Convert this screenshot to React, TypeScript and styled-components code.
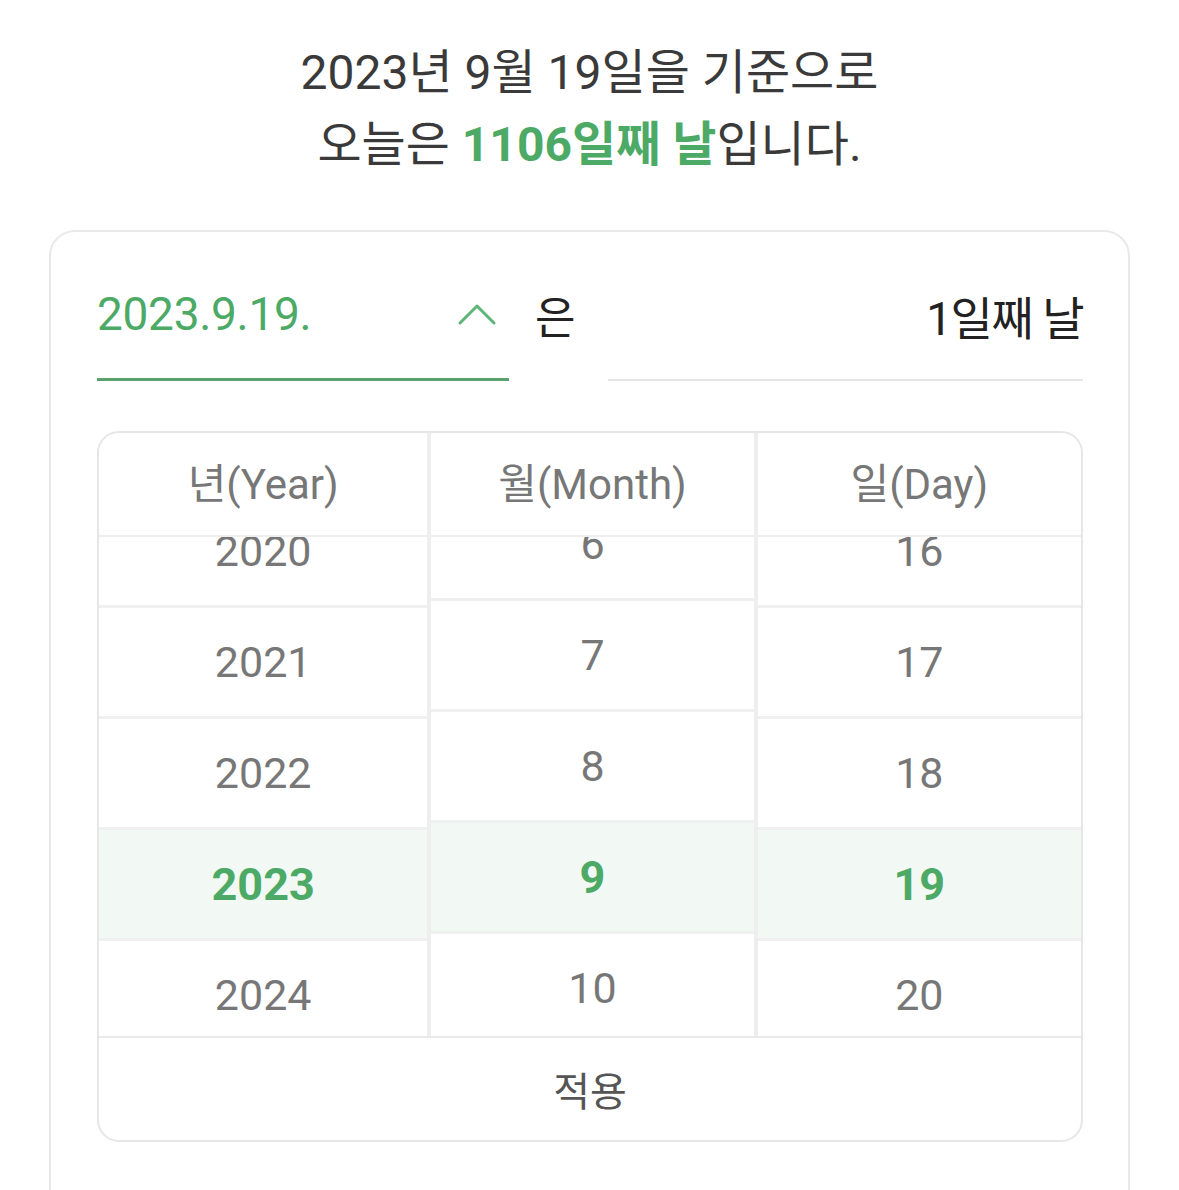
import React from "react";
import styled, { createGlobalStyle } from "styled-components";

const GlobalStyle = createGlobalStyle`
    body {
        margin: 0;
        background: #ffffff;
        font-family: Roboto, "Noto Sans CJK KR", sans-serif;
    }
    * {
        box-sizing: border-box;
    }
`;

const GREEN = "#4caa66";

// only the rows that show in the scroll window
const years = [2020, 2021, 2022, 2023, 2024];
const months = [6, 7, 8, 9, 10];
const days = [16, 17, 18, 19, 20];

interface PickerColumnProps {
    title: string;
    items: number[];
    selected: number;
    offset: number;
}

const PickerColumn: React.FC<PickerColumnProps> = ({ title, items, selected, offset }) => (
    <Column>
        <ColumnHeader>{title}</ColumnHeader>
        <ScrollWindow>
            <ItemList $offset={offset}>
                {items.map((item) => (
                    <Item key={item} $active={item === selected}>
                        {item}
                    </Item>
                ))}
            </ItemList>
        </ScrollWindow>
    </Column>
);

export default function App() {
    return (
        <Wrapper>
            <GlobalStyle />
            <Title>
                2023년 9월 19일을 기준으로
                <br />
                오늘은 <Strong>1106일째 날</Strong>입니다.
            </Title>
            <Card>
                <InputRow>
                    <DateField>
                        <DateText>2023.9.19.</DateText>
                        <svg width="40" height="24" viewBox="0 0 40 24" fill="none">
                            <path
                                d="M3 21 L20 4 L37 21"
                                stroke="#5cb576"
                                strokeWidth="3"
                                strokeLinecap="round"
                                strokeLinejoin="round"
                            />
                        </svg>
                    </DateField>
                    <Particle>은</Particle>
                    <ResultField>1일째 날</ResultField>
                </InputRow>
                <Picker>
                    <Columns>
                        <PickerColumn title="년(Year)" items={years} selected={2023} offset={-40} />
                        <PickerColumn title="월(Month)" items={months} selected={9} offset={-47} />
                        <PickerColumn title="일(Day)" items={days} selected={19} offset={-40} />
                    </Columns>
                    <ApplyButton>적용</ApplyButton>
                </Picker>
            </Card>
        </Wrapper>
    );
}

const Wrapper = styled.div`
    display: flex;
    flex-direction: column;
    align-items: center;
    padding-top: 37px;
`;

const Title = styled.h1`
    margin: 0;
    font-size: 48px;
    font-weight: 400;
    line-height: 72px;
    color: #3a3a3a;
    text-align: center;
`;

const Strong = styled.span`
    font-weight: 700;
    color: ${GREEN};
`;

const Card = styled.div`
    width: 1081px;
    margin-top: 49px;
    padding: 48px 45px 90px 46px;
    border: 2px solid #e9e9e9;
    border-radius: 26px;
`;

const InputRow = styled.div`
    display: flex;
    align-items: flex-start;
`;

const DateField = styled.div`
    width: 412px;
    height: 101px;
    display: flex;
    align-items: center;
    justify-content: space-between;
    padding: 0 12px 30px 0;
    border-bottom: 3px solid #5ba06f;
`;

const DateText = styled.span`
    font-size: 46px;
    color: ${GREEN};
    letter-spacing: -0.3px;
`;

const Particle = styled.span`
    width: 99px;
    height: 70px;
    display: flex;
    align-items: center;
    padding-left: 26px;
    font-size: 44px;
    color: #222222;
`;

const ResultField = styled.div`
    flex: 1;
    height: 101px;
    display: flex;
    align-items: center;
    justify-content: flex-end;
    padding-bottom: 30px;
    font-size: 46px;
    color: #222222;
    border-bottom: 2px solid #e6e6e6;
    letter-spacing: -1.5px;
`;

const Picker = styled.div`
    margin-top: 50px;
    border: 2px solid #e6e6e6;
    border-radius: 22px;
    overflow: hidden;
`;

const Columns = styled.div`
    display: grid;
    grid-template-columns: 328fr 322fr 323fr;
    column-gap: 4px;
    background: #eeeeee;
    border-bottom: 2px solid #eaeaea;
`;

const Column = styled.div`
    display: flex;
    flex-direction: column;
    background: #ffffff;
`;

const ColumnHeader = styled.div`
    height: 104px;
    display: flex;
    align-items: center;
    justify-content: center;
    padding-bottom: 8px;
    font-size: 42px;
    color: #777777;
    border-bottom: 2px solid #eeeeee;
`;

const ScrollWindow = styled.div`
    height: 499px;
    overflow: hidden;
`;

const ItemList = styled.div<{ $offset: number }>`
    margin-top: ${(p) => p.$offset}px;
`;

const Item = styled.div<{ $active: boolean }>`
    height: 111px;
    display: flex;
    align-items: center;
    justify-content: center;
    font-size: ${(p) => (p.$active ? 45 : 43)}px;
    font-weight: ${(p) => (p.$active ? 700 : 400)};
    color: ${(p) => (p.$active ? GREEN : "#777777")};
    background: ${(p) => (p.$active ? "#f2f8f4" : "#ffffff")};
    border-bottom: 3px solid #f0f0f0;
`;

const ApplyButton = styled.div`
    height: 102px;
    display: flex;
    align-items: center;
    justify-content: center;
    font-size: 40px;
    color: #555555;
`;
